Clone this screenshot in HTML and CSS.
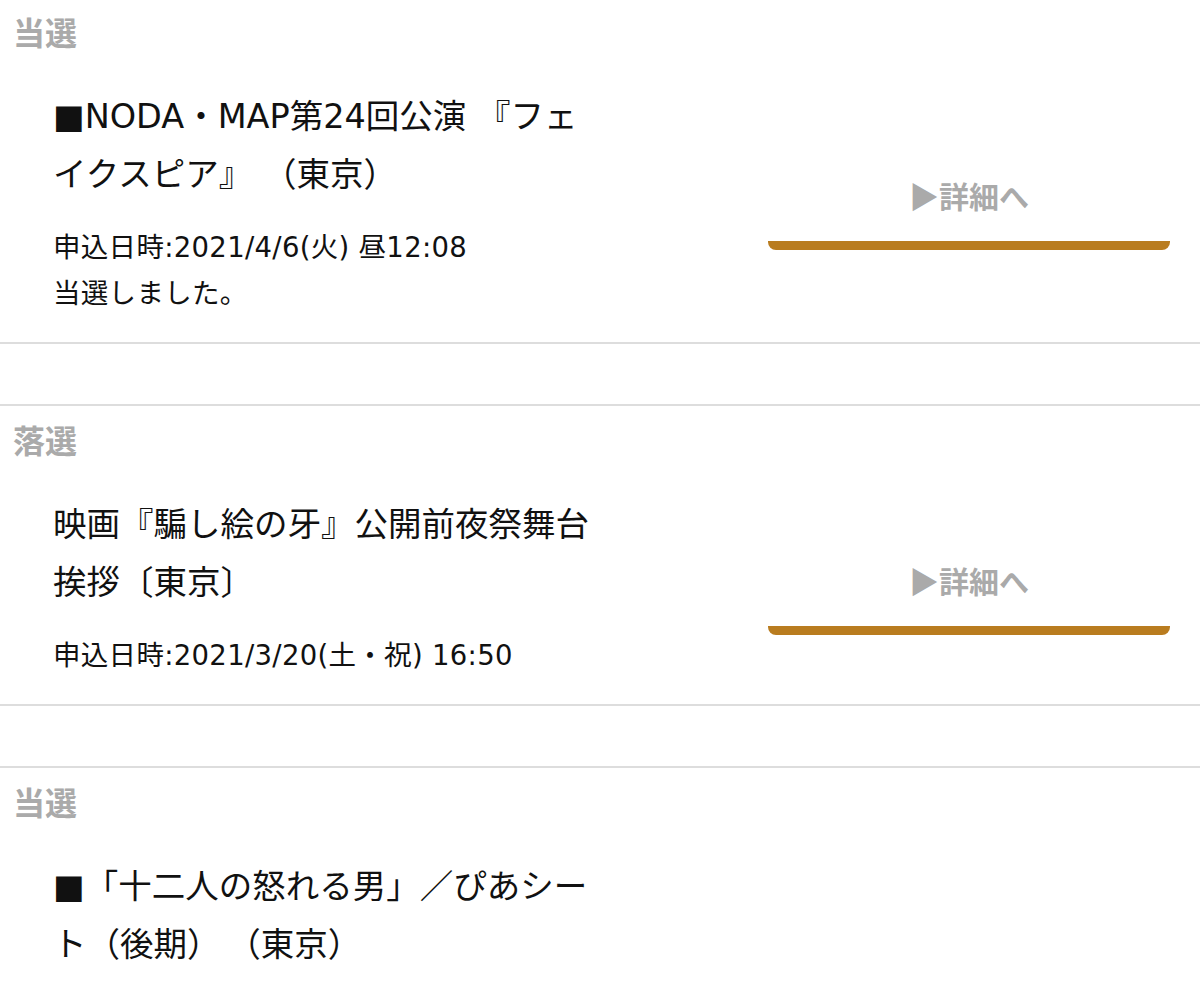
FILE: index.html
```html
<!DOCTYPE html>
<html lang="ja">
<head>
    <meta charset="UTF-8">
    <meta name="viewport" content="width=device-width, initial-scale=1.0">
    <title>抽選結果</title>
    <link rel="stylesheet" href="styles.css">
</head>
<body>
<div class="entry-list">
    <section class="entry">
        <h2 class="entry-status">当選</h2>
        <div class="entry-body">
            <div class="entry-info">
                <p class="entry-title">■NODA・MAP第24回公演 『フェイクスピア』 （東京）</p>
                <p class="entry-text">申込日時:2021/4/6(火) 昼12:08</p>
                <p class="entry-text">当選しました。</p>
            </div>
            <a class="detail-btn" href="#">▶詳細へ</a>
        </div>
    </section>

    <section class="entry">
        <h2 class="entry-status">落選</h2>
        <div class="entry-body">
            <div class="entry-info">
                <p class="entry-title">映画『騙し絵の牙』公開前夜祭舞台挨拶〔東京〕</p>
                <p class="entry-text">申込日時:2021/3/20(土・祝) 16:50</p>
            </div>
            <a class="detail-btn" href="#">▶詳細へ</a>
        </div>
    </section>

    <section class="entry">
        <h2 class="entry-status">当選</h2>
        <div class="entry-body">
            <div class="entry-info">
                <p class="entry-title">■「十二人の怒れる男」／ぴあシート（後期）&#8201;（東京）</p>
                <p class="entry-text">申込日時:2021/3/13(土) 10:00</p>
                <p class="entry-text">当選しました。</p>
                <p class="entry-text">お支払い期限までに</p>
                <p class="entry-text">手続きを完了してください。</p>
            </div>
            <a class="detail-btn" href="#">▶詳細へ</a>
        </div>
    </section>
</div>
</body>
</html>
```

FILE: styles.css
```css
body {
    margin: 0;
    background-color: #fff;
    color: #111;
    font-family: "DejaVu Sans", "Noto Sans CJK JP", sans-serif;
}
.entry-list {
    margin-top: -4px;
}
.entry {
    border-top: 2px solid #ddd;
    border-bottom: 2px solid #ddd;
    padding: 13px 30px 26px 0;
    margin-bottom: 60px;
}
.entry-status {
    margin: 0 0 37px 13px;
    font-family: "Noto Sans CJK JP", sans-serif;
    font-size: 32px;
    line-height: 40px;
    font-weight: bold;
    color: #aaa;
}
.entry-body {
    display: flex;
    align-items: center;
    justify-content: space-between;
}
.entry-info {
    width: 545px;
    margin-left: 53px;
}
.entry-title {
    margin: 0 0 20px;
    font-size: 33.5px;
    line-height: 58px;
}
.entry-text {
    margin: 0;
    font-size: 27.5px;
    line-height: 46px;
    letter-spacing: 0.3px;
}
.detail-btn {
    display: flex;
    align-items: center;
    justify-content: center;
    width: 402px;
    height: 81px;
    padding-bottom: 6px;
    box-sizing: content-box;
    border-bottom: 9px solid #b97c1f;
    border-radius: 8px;
    background-color: #fff;
    color: #aaa;
    font-family: "Noto Sans CJK JP", sans-serif;
    font-size: 30px;
    font-weight: bold;
    text-decoration: none;
}
```
